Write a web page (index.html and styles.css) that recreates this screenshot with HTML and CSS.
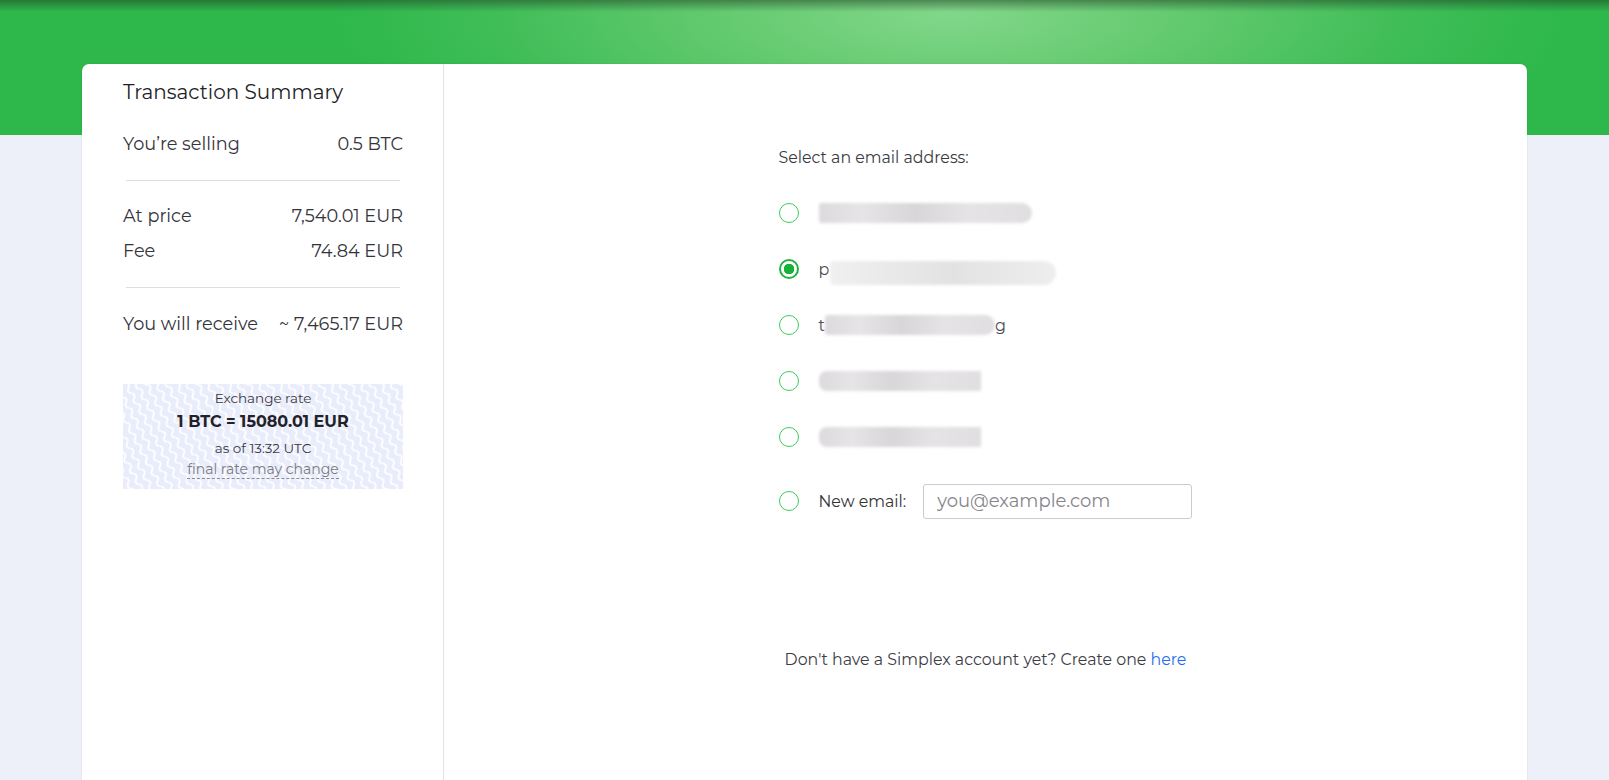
FILE: index.html
```html
<!DOCTYPE html>
<html lang="en">
<head>
    <meta charset="UTF-8">
    <title>Simplex - Select email</title>
    <link rel="stylesheet" href="styles.css">
</head>
<body>
    <div class="top-band"></div>

    <div class="card">
        <aside class="summary">
            <h2 class="summary-title">Transaction Summary</h2>

            <div class="row first">
                <span>You’re selling</span>
                <span>0.5 BTC</span>
            </div>
            <hr class="divider">
            <div class="row">
                <span>At price</span>
                <span>7,540.01 EUR</span>
            </div>
            <div class="row tight">
                <span>Fee</span>
                <span>74.84 EUR</span>
            </div>
            <hr class="divider">
            <div class="row total">
                <span>You will receive</span>
                <span>~ 7,465.17 EUR</span>
            </div>

            <div class="rate-box">
                <svg class="rate-pattern" width="100%" height="100%">
                    <defs>
                        <pattern id="waves" width="9" height="12" patternUnits="userSpaceOnUse" patternTransform="rotate(-28)">
                            <path d="M3 0 q4 3 0 6 t0 6" fill="none" stroke="#fff" stroke-width="1.8"/>
                        </pattern>
                    </defs>
                    <rect width="100%" height="100%" fill="url(#waves)"/>
                </svg>
                <div class="rate-label">Exchange rate</div>
                <div class="rate-value">1 BTC = 15080.01 EUR</div>
                <div class="rate-label">as of 13:32 UTC</div>
                <div class="rate-note">final rate may change</div>
            </div>
        </aside>

        <main class="picker">
            <div class="picker-inner">
                <div class="picker-label">Select an email address:</div>

                <div class="options">
                    <label class="option">
                        <span class="radio"></span>
                        <span class="blur-text" style="width: 213px"></span>
                    </label>
                    <label class="option">
                        <span class="radio checked"></span>
                        <span class="peek">p</span>
                        <span class="blur-text tall" style="width: 226px"></span>
                    </label>
                    <label class="option">
                        <span class="radio"></span>
                        <span class="peek">t</span>
                        <span class="blur-text" style="width: 170px"></span>
                        <span class="peek">g</span>
                    </label>
                    <label class="option">
                        <span class="radio"></span>
                        <span class="blur-text square" style="width: 162px"></span>
                    </label>
                    <label class="option">
                        <span class="radio"></span>
                        <span class="blur-text square" style="width: 162px"></span>
                    </label>
                    <label class="option new">
                        <span class="radio"></span>
                        <span class="new-label">New email:</span>
                        <input class="email-input" type="text" placeholder="you@example.com">
                    </label>
                </div>

                <p class="signup">Don't have a Simplex account yet? Create one <a href="#">here</a></p>
            </div>
        </main>
    </div>
</body>
</html>
```

FILE: styles.css
```css
body {
    margin: 0;
    font-family: 'Montserrat', 'Open Sans', sans-serif;
    background: #edf0f8;
    color: #2e2e36;
}

.top-band {
    height: 135px;
    background:
        linear-gradient(to bottom, rgba(30, 60, 35, 0.5), rgba(30, 60, 35, 0) 12px),
        radial-gradient(ellipse 38% 140% at 59% 10%, #82d78a 0%, #66cb71 35%, #3fbd57 75%, #2eb84b 100%);
}

.card {
    width: 1445px;
    margin: -71px auto 0;
    min-height: 760px;
    background: #fff;
    border-radius: 7px 7px 0 0;
    box-shadow: 0 0 2px rgba(0, 0, 0, 0.12);
    display: grid;
    grid-template-columns: 362px 1fr;
}

/* left summary column */
.summary {
    border-right: 1px solid #e3e3e6;
    padding: 16px 40px 16px 41px;
}
.summary-title {
    margin: 0;
    font-size: 20px;
    line-height: 24px;
    font-weight: 400;
    color: #1f1f27;
}
.row {
    display: flex;
    justify-content: space-between;
    font-size: 17.7px;
    line-height: 24px;
    color: #34343c;
    margin-top: 23px;
}
.row.first {
    margin-top: 28px;
}
.row.tight {
    margin-top: 11px;
}
.row.total {
    margin-top: 24px;
}
.divider {
    border: 0;
    border-top: 1px solid #dedee2;
    margin: 24px 3px 0;
}

.rate-box {
    position: relative;
    margin-top: 48px;
    height: 105px;
    background: #e9ecfb;
    text-align: center;
    padding-top: 4px;
    box-sizing: border-box;
}
.rate-pattern {
    position: absolute;
    top: 0;
    left: 0;
}
.rate-label, .rate-value, .rate-note {
    position: relative;
}
.rate-label {
    font-size: 13.5px;
    line-height: 20px;
    color: #38383f;
}
.rate-value {
    font-size: 16px;
    line-height: 24px;
    font-weight: 700;
    color: #222228;
    margin: 2px 0 4px;
}
.rate-note {
    display: inline-block;
    font-size: 14px;
    line-height: 18px;
    color: #7a7a82;
    border-bottom: 1px dashed #8a8a92;
    margin-top: 2px;
}

/* right picker column */
.picker {
    display: flex;
    justify-content: center;
    padding-top: 84px;
}
.picker-inner {
    width: 414px;
}
.picker-label {
    font-size: 15.8px;
    line-height: 20px;
    color: #3a3a42;
}
.options {
    display: flex;
    flex-direction: column;
    gap: 20px;
    margin-top: 27px;
}
.option {
    display: flex;
    align-items: center;
    height: 36px;
    font-size: 16px;
    color: #3a3a42;
}
.option.new {
    margin-top: 8px;
}
.radio {
    width: 20px;
    height: 20px;
    box-sizing: border-box;
    border: 1.6px solid #3ccb5b;
    border-radius: 50%;
    margin-right: 20px;
    flex-shrink: 0;
}
.radio.checked {
    border: 2px solid #1fb33f;
    background: radial-gradient(circle, #17b139 0 5px, #fff 5.5px);
}
.peek {
    font-size: 16px;
    color: #4a4a52;
}
.blur-text {
    height: 20px;
    border-radius: 4px 12px 12px 4px;
    background: linear-gradient(to right, #dcdadc, #e6e4e6 20%, #d8d6d8 45%, #e5e3e5 70%, #e0dee0);
    filter: blur(1.5px);
}
.blur-text.tall {
    height: 24px;
    margin-left: 1px;
    margin-top: 8px;
    background: linear-gradient(to right, #f1f0f1, #e9e8e9 30%, #e3e2e3 55%, #efeeef);
}
.blur-text.square {
    border-radius: 8px 0 0 8px;
}
.new-label {
    font-size: 15.8px;
    color: #333;
    margin-right: 17px;
    white-space: nowrap;
    flex-shrink: 0;
}
.email-input {
    width: 269px;
    height: 35px;
    flex-shrink: 0;
    box-sizing: border-box;
    border: 1px solid #c9ccd4;
    border-radius: 3px;
    padding: 0 13px;
    font-family: inherit;
    font-size: 18px;
    color: #333;
}
.email-input::placeholder {
    color: #85858c;
}

.signup {
    margin: 131px 0 0;
    text-align: center;
    font-size: 15.8px;
    line-height: 20px;
    color: #3c3c44;
}
.signup a {
    color: #1f6df0;
    text-decoration: none;
}
```
